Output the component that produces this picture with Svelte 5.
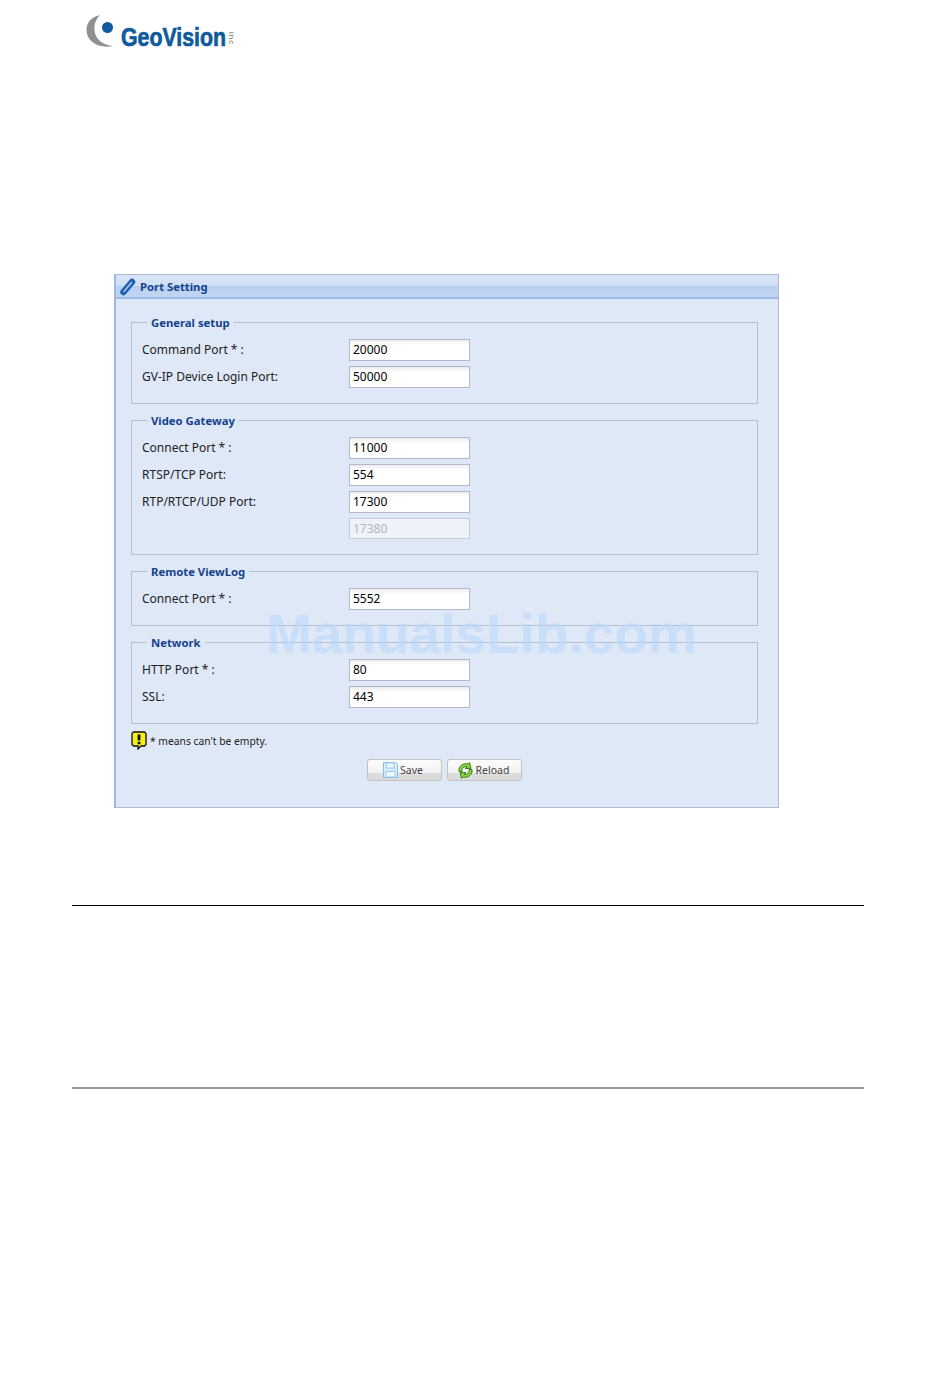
<script>
	const groups = [
		{
			title: 'General setup',
			rows: [
				{ label: 'Command Port * :', value: '20000' },
				{ label: 'GV-IP Device Login Port:', value: '50000' }
			]
		},
		{
			title: 'Video Gateway',
			rows: [
				{ label: 'Connect Port * :', value: '11000' },
				{ label: 'RTSP/TCP Port:', value: '554' },
				{ label: 'RTP/RTCP/UDP Port:', value: '17300' },
				{ label: '', value: '17380', disabled: true }
			]
		},
		{
			title: 'Remote ViewLog',
			rows: [{ label: 'Connect Port * :', value: '5552' }]
		},
		{
			title: 'Network',
			rows: [
				{ label: 'HTTP Port * :', value: '80' },
				{ label: 'SSL:', value: '443' }
			]
		}
	];
</script>

<div class="page">
	<header class="logo">
		<svg width="32" height="36" viewBox="0 0 32 36">
			<path d="M15 2C6 4 1 10 1.500 18 2 28 13 36 28 33 19 32 10 27 9.500 17 9 11 11 6 15 2z" fill="#8d9193" />
			<circle cx="22.500" cy="14.500" r="5.500" fill="#0f5a9c" />
		</svg>
		<span class="brand">GeoVision</span>
		<span class="inc">inc</span>
	</header>

	<section class="panel">
		<div class="title-bar">
			<svg width="18" height="20" viewBox="0 0 18 20">
				<path d="M4.500 15 13 5" stroke="#1f5fb8" stroke-width="6.500" stroke-linecap="round" fill="none" />
				<path d="M5 14.500 12.500 5.500" stroke="#bcd2f0" stroke-width="1.300" stroke-linecap="round" fill="none" />
			</svg>
			<span>Port Setting</span>
		</div>

		<div class="body">
			{#each groups as group}
				<fieldset>
					<legend>{group.title}</legend>
					{#each group.rows as row}
						<div class="row" class:short={row.disabled}>
							<label for={group.title + row.value}>{row.label}</label>
							<input id={group.title + row.value} type="text" value={row.value} disabled={row.disabled} />
						</div>
					{/each}
				</fieldset>
			{/each}

			<p class="note">
				<svg width="16" height="19" viewBox="0 0 16 19">
					<path d="M2.500 1h11L15 2.500v11L13.500 15H10l-3 3v-3H2.500L1 13.500v-11z" fill="#f6ee1c" stroke="#111" stroke-width="1.300" />
					<rect x="6.600" y="3.500" width="2.800" height="6" fill="#111" />
					<rect x="6.600" y="10.800" width="2.800" height="2.400" fill="#111" />
				</svg>
				<span>* means can't be empty.</span>
			</p>

			<div class="buttons">
				<button type="button">
					<svg width="15" height="16" viewBox="0 0 15 16">
						<path d="M.5.500h12l2 2v13H.5z" fill="#d5eafa" stroke="#86bde4" />
						<rect x="3.500" y="1" width="7.500" height="5" fill="#f0f8fe" stroke="#9ccaea" />
						<rect x="3" y="9.500" width="9" height="5.500" fill="#f0f8fe" stroke="#9ccaea" />
					</svg>
					Save
				</button>
				<button type="button">
					<svg width="17" height="17" viewBox="0 0 17 17">
						<path d="M2 9.500C1 4.500 6 .5 11 2l1.500-1.500 1.500 6h-6L10 5C7 4 4.500 6 5 9.500z" fill="#86d13a" stroke="#2f7a1c" stroke-width=".9" />
						<path d="M15 7.500c1 5-4 9-9 7.500l-1.500 1.500-1.500-6h6L7 12c3 1 5.500-1 5-4.500z" fill="#86d13a" stroke="#2f7a1c" stroke-width=".9" />
					</svg>
					Reload
				</button>
			</div>
		</div>

		<div class="watermark">ManualsLib.com</div>
	</section>

	<hr class="rule-top" />
	<hr class="rule-bottom" />
</div>

<style>
	:global(body) {
		background: #fff;
	}

	.page {
		position: relative;
		height: 1379px;
		overflow: hidden;
		font-family: 'Noto Sans', sans-serif;
	}

	.logo {
		display: flex;
		align-items: flex-start;
		height: 274px;
		padding: 13px 0 0 85px;
		box-sizing: border-box;
	}

	.brand {
		width: 104px;
		margin: 10px 0 0 4px;
		font: bold 26px/28px 'Liberation Sans', sans-serif;
		color: #0f5a9c;
		-webkit-text-stroke: 0.7px #0f5a9c;
		transform: scaleX(0.82);
		transform-origin: left top;
	}

	.inc {
		margin: 19px 0 0 2px;
		font: 8px/8px 'Liberation Sans', sans-serif;
		letter-spacing: 1px;
		color: #666;
		writing-mode: vertical-rl;
	}

	.panel {
		position: relative;
		width: 665px;
		height: 534px;
		margin-left: 114px;
		box-sizing: border-box;
		background: #dfe8f6;
		border: 1px solid #a9bbd6;
		border-left: 2px solid #9db8e2;
	}

	.title-bar {
		display: flex;
		align-items: center;
		gap: 3px;
		height: 24px;
		padding-left: 3px;
		box-sizing: border-box;
		background: linear-gradient(#dbe6f7 0, #cfdef5 11px, #b9cff0 11px, #c2d5f2 22px, #9db9e6 22px);
		color: #15428b;
		font-size: 11.300px;
		font-weight: bold;
	}

	.title-bar span {
		padding-bottom: 2px;
	}

	.body {
		padding: 16px 20px 0 15px;
	}

	fieldset {
		margin: 0 0 9px;
		padding: 9px 10px 15px;
		border: 1px solid #b5bfcd;
		min-width: 0;
	}

	fieldset:last-of-type {
		margin-bottom: 7px;
	}

	legend {
		margin-left: 5px;
		padding: 0 4px;
		color: #15428b;
		font-size: 11.300px;
		line-height: 15px;
		font-weight: bold;
	}

	.row {
		display: flex;
		align-items: center;
		height: 22px;
		margin-bottom: 5px;
	}

	.row:last-child {
		margin-bottom: 0;
	}

	.row.short {
		height: 21px;
	}

	label {
		width: 207px;
		padding-bottom: 2px;
		font-size: 12px;
		color: #222;
	}

	input {
		width: 121px;
		height: 100%;
		box-sizing: border-box;
		padding: 0 3px 2px;
		border: 1px solid #b5b8c8;
		background: linear-gradient(#ececec, #fff 5px);
		color: #000;
		font: 12px 'Noto Sans', sans-serif;
	}

	input:disabled {
		padding-bottom: 0;
		border-color: #c5cbd4;
		background: #eef3f9;
		color: #b0b6bf;
		opacity: 1;
	}

	.note {
		display: flex;
		align-items: center;
		gap: 3px;
		margin: 0;
		color: #222;
		font-size: 10.300px;
	}

	.buttons {
		display: flex;
		justify-content: center;
		gap: 5px;
		margin-top: 9px;
	}

	button {
		display: flex;
		align-items: center;
		justify-content: center;
		gap: 2px;
		width: 75px;
		height: 22px;
		padding: 0 3px 0 0;
		box-sizing: border-box;
		border: 1px solid #c3c3c3;
		border-radius: 3px;
		background: linear-gradient(#fdfdfd, #f1f1f1 13px, #dcdcdc 13px, #dcdcdc);
		color: #444;
		font: 10.500px 'Noto Sans', sans-serif;
	}

	.watermark {
		position: absolute;
		left: 150px;
		top: 329px;
		color: rgba(185, 215, 252, 0.6);
		font: bold 55px/60px 'Liberation Sans', sans-serif;
		white-space: nowrap;
		pointer-events: none;
	}

	hr {
		margin: 0 0 0 72px;
		width: 792px;
		border: 0;
	}

	.rule-top {
		height: 1px;
		margin-top: 97px;
		background: #000;
	}

	.rule-bottom {
		height: 2px;
		margin-top: 181px;
		background: #999;
	}
</style>
